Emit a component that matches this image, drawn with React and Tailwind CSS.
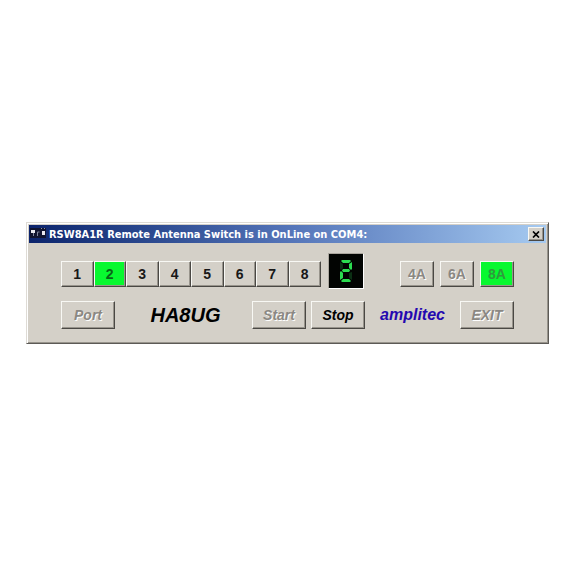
import React, { useState } from "react";

const raised =
  "flex items-center justify-center border border-t-[#f8f8f4] border-l-[#f8f8f4] border-r-[#4a4844] border-b-[#4a4844] leading-none";
const innerShade = "shadow-[inset_-1px_-1px_0_#98948c]";
const disabledText = "text-[#8b8883] [text-shadow:1px_1px_0_#ffffff]";

function Segment({ points, on }) {
  return <polygon points={points} fill={on ? "#2bdc50" : "#0b3014"} />;
}

function Display() {
  return (
    <div className="h-9 w-9 shrink-0 border border-t-[#aaa69e] border-l-[#aaa69e] border-r-white border-b-white bg-[#020402]">
      <svg viewBox="0 0 34 34" className="h-full w-full" role="img" aria-label="2">
        <Segment on points="13,6 21,6 22,7 20,9 14,9 12,7" />
        <Segment on points="23,8 23,15 22,16 20,14 20,10" />
        <Segment on points="14,15 20,15 21,16.500 20,18 14,18 13,16.500" />
        <Segment on points="11,18 12,17 14,19 14,24 11,26" />
        <Segment on points="12,27 14,25 20,25 22,27 21,28 13,28" />
        <Segment points="11,8 14,10 14,14 12,16 11,15" />
        <Segment points="23,18 23,26 20,24 20,19" />
      </svg>
    </div>
  );
}

function TitleIcon() {
  return (
    <svg viewBox="0 0 18 14" className="h-3.5 w-[18px] shrink-0" aria-hidden="true">
      <path d="M1 1h16v10h-16z" fill="#10142f" />
      <path d="M2 3h4v3h-4zM13 4h3v4h-3z" fill="#e8e8ee" />
      <path d="M4.500 6v3M8.500 9v-4h2" stroke="#80859c" fill="none" />
      <path d="M12 1h1v1h-1zM15 1h1v1h-1z" fill="#8e92a6" />
    </svg>
  );
}

function TextButton({ children, disabled }) {
  return (
    <button
      type="button"
      disabled={disabled}
      className={`${raised} ${innerShade} h-7 w-[54px] shrink-0 text-sm font-bold italic ${disabled ? disabledText : "text-black"}`}
    >
      {children}
    </button>
  );
}

export default function App() {
  const [active, setActive] = useState(2);
  return (
    <main className="min-h-screen bg-white pt-[222px] pr-[21px] pl-[26px] font-['Liberation_Sans',Arial,sans-serif]">
      <section className="border border-t-[#dedbd5] border-l-[#dedbd5] border-r-[#5c5a56] border-b-[#5c5a56] bg-[#d4d0c8] p-0.5 shadow-[inset_1px_1px_0_#ffffff,inset_-1px_-1px_0_#98948c]">
        <header className="flex h-[18px] items-center bg-linear-to-r from-[#0c246c] via-[#5474b8] to-[#a6caf0] pr-0.5">
          <TitleIcon />
          <h1 className="flex-1 pl-0.5 font-['DejaVu_Sans_Condensed','DejaVu_Sans',sans-serif] text-[11px] leading-none font-bold whitespace-nowrap text-white">
            RSW8A1R Remote Antenna Switch is in OnLine on COM4:
          </h1>
          <button type="button" aria-label="Close" className={`${raised} ${innerShade} h-3.5 w-4 bg-[#d4d0c8]`}>
            <svg viewBox="0 0 8 7" className="h-[7px] w-2" aria-hidden="true">
              <path d="M1 0.5L7 6.5M7 0.5L1 6.5" stroke="#000" strokeWidth="1.7" />
            </svg>
          </button>
        </header>

        <div className="flex flex-col gap-3 pt-2.5 pr-8 pb-3 pl-8">
          <div className="flex items-end">
            <div className="flex w-[260px] shrink-0 pb-0.5">
              {[1, 2, 3, 4, 5, 6, 7, 8].map((n) => (
                <button
                  key={n}
                  type="button"
                  onClick={() => setActive(n)}
                  className={`${raised} ${innerShade} h-[26px] flex-1 text-sm font-bold ${active === n ? "bg-[#08f830] text-[#0a6418]" : "text-[#181818]"}`}
                >
                  {n}
                </button>
              ))}
            </div>
            <div className="pl-[7px]">
              <Display />
            </div>
            <div className="ml-auto flex gap-1.5 pb-0.5">
              {["4A", "6A"].map((label) => (
                <button key={label} type="button" disabled className={`${raised} ${innerShade} ${disabledText} h-[26px] w-[34px] text-sm font-bold`}>
                  {label}
                </button>
              ))}
              <button type="button" disabled className={`${raised} ${innerShade} h-[26px] w-[34px] bg-[#08f830] text-sm font-bold text-[#2f9a3c]`}>
                8A
              </button>
            </div>
          </div>

          <div className="flex items-center">
            <TextButton disabled>Port</TextButton>
            <div className="flex-1 pl-1 text-center text-[20px] leading-7 font-bold text-black italic">HA8UG</div>
            <div className="flex gap-[5px]">
              <TextButton disabled>Start</TextButton>
              <TextButton>Stop</TextButton>
            </div>
            <div className="w-[95px] text-center text-base leading-7 font-bold text-[#2408b0] italic">amplitec</div>
            <TextButton disabled>EXIT</TextButton>
          </div>
        </div>
      </section>
    </main>
  );
}
